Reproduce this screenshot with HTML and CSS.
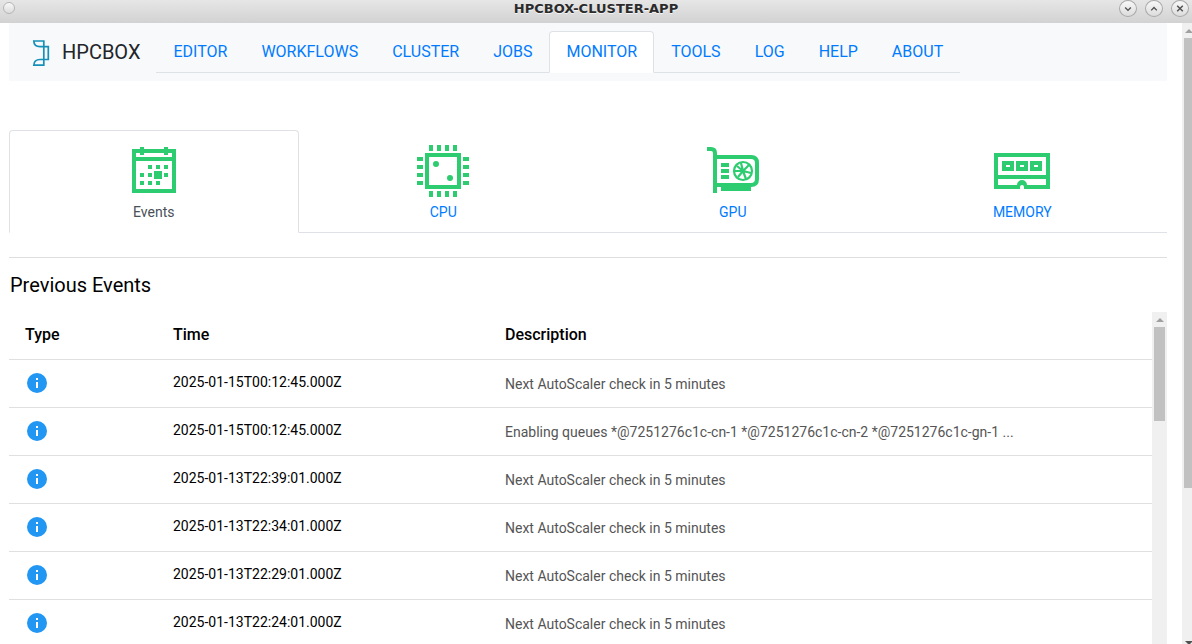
FILE: index.html
```html
<!DOCTYPE html>
<html lang="en">
<head>
<meta charset="utf-8">
<meta name="viewport" content="width=device-width, initial-scale=1">
<title>HPCBOX-CLUSTER-APP</title>
<link rel="stylesheet" href="styles.css">
</head>
<body>
<svg class="defs" aria-hidden="true">
  <symbol id="info" viewBox="0 0 24 24">
    <circle cx="12" cy="12" r="10" fill="#2196f3"/>
    <path d="M11 7h2v2h-2zM11 11h2v6h-2z" fill="#fff"/>
  </symbol>
</svg>
<header class="titlebar">
  <button class="win-btn win-menu" aria-label="Window menu"></button>
  <h1 class="win-title">HPCBOX-CLUSTER-APP</h1>
  <div class="win-controls">
    <button class="win-btn" aria-label="Minimize"><svg viewBox="0 0 16 16"><path d="M5 7l3 3 3-3"/></svg></button>
    <button class="win-btn" aria-label="Maximize"><svg viewBox="0 0 16 16"><path d="M5 10l3-3 3 3"/></svg></button>
    <button class="win-btn" aria-label="Close"><svg viewBox="0 0 16 16"><path d="M5 5l6 6M11 5l-6 6"/></svg></button>
  </div>
</header>
<div class="viewport">
  <main class="page">
    <nav class="navbar">
      <a class="brand" href="#">
        <svg class="logo" viewBox="0 0 32 32" aria-hidden="true">
          <path d="M8.800 5H18.800V29.200H8.800Q9 23.500 15 23.500H23.300V10.700H15Q9 10.700 8.800 5z"/>
        </svg>
        <span>HPCBOX</span>
      </a>
      <div class="nav-tabs">
        <a class="nav-link" href="#">EDITOR</a>
        <a class="nav-link" href="#">WORKFLOWS</a>
        <a class="nav-link" href="#">CLUSTER</a>
        <a class="nav-link" href="#">JOBS</a>
        <a class="nav-link active" href="#" aria-current="page">MONITOR</a>
        <a class="nav-link" href="#">TOOLS</a>
        <a class="nav-link" href="#">LOG</a>
        <a class="nav-link" href="#">HELP</a>
        <a class="nav-link" href="#">ABOUT</a>
      </div>
    </nav>
    <div class="monitor-tabs">
      <a class="monitor-tab active" href="#">
        <svg class="tab-icon" viewBox="0 0 64 64" aria-hidden="true">
          <path fill-rule="evenodd" d="M10 10h8V8h4v2h20V8h4v2h8v44H10zM14 14v4h36v-4h-4v2h-4v-2H22v2h-4v-2zM14 22v28h36V22z"/>
          <path d="M26 26h4v4h-4zM34 26h4v4h-4zM42 26h4v4h-4zM18 34h4v4h-4zM26 34h4v4h-4zM32 32h8v8h-8zM42 34h4v4h-4zM18 42h4v4h-4zM26 42h4v4h-4zM34 42h4v4h-4z"/>
        </svg>
        <span>Events</span>
      </a>
      <a class="monitor-tab" href="#">
        <svg class="tab-icon" viewBox="0 0 64 64" aria-hidden="true">
          <path fill-rule="evenodd" d="M14 14h36v36H14zM18 18v28h28V18z"/>
          <path d="M18 6h4v6h-4zM26 6h4v6h-4zM34 6h4v6h-4zM42 6h4v6h-4zM18 52h4v6h-4zM26 52h4v6h-4zM34 52h4v6h-4zM42 52h4v6h-4zM6 18h6v4H6zM6 26h6v4H6zM6 34h6v4H6zM6 42h6v4H6zM52 18h6v4h-6zM52 26h6v4h-6zM52 34h6v4h-6zM52 42h6v4h-6z"/>
          <circle cx="25" cy="25" r="3"/><circle cx="39" cy="39" r="3"/>
        </svg>
        <span>CPU</span>
      </a>
      <a class="monitor-tab" href="#">
        <svg class="tab-icon" viewBox="0 0 64 64" aria-hidden="true">
          <path class="line" d="M6 10h4q4 0 4 4v40M14 18h36q6 0 6 6v16q0 6-6 6H14"/>
          <path d="M20 46h30v6H20zM20 24h8v4h-8zM20 30h8v4h-8zM20 36h8v4h-8z"/>
          <circle class="fan" cx="42" cy="32" r="9"/>
          <path class="fan" d="M42 32L40 24M42 32l6-6M42 32l8 2M42 32l3 8M42 32l-5 6M42 32l-8 0M42 32l-6-5"/>
        </svg>
        <span>GPU</span>
      </a>
      <a class="monitor-tab" href="#">
        <svg class="tab-icon" viewBox="0 0 64 64" aria-hidden="true">
          <path fill-rule="evenodd" d="M4 14h56v36H34v-2a2 2 0 0 0-4 0v2H4zM8 18v18h48V18zM8 40v6h19a5 5 0 0 1 10 0h19v-6z"/>
          <path fill-rule="evenodd" d="M12 22h12v10H12zM16 26v2h4v-2zM26 22h12v10H26zM30 26v2h4v-2zM40 22h12v10H40zM44 26v2h4v-2z"/>
        </svg>
        <span>MEMORY</span>
      </a>
    </div>
    <section class="events">
      <h2 class="events-title">Previous Events</h2>
      <div class="events-scroll">
        <table class="events-table">
          <thead><tr><th class="col-type">Type</th><th class="col-time">Time</th><th>Description</th></tr></thead>
          <tbody>
            <tr><td><svg class="info" role="img" aria-label="Info"><use href="#info"/></svg></td><td class="time">2025-01-15T00:12:45.000Z</td><td class="desc">Next AutoScaler check in 5 minutes</td></tr>
            <tr><td><svg class="info" role="img" aria-label="Info"><use href="#info"/></svg></td><td class="time">2025-01-15T00:12:45.000Z</td><td class="desc">Enabling queues *@7251276c1c-cn-1 *@7251276c1c-cn-2 *@7251276c1c-gn-1 ...</td></tr>
            <tr><td><svg class="info" role="img" aria-label="Info"><use href="#info"/></svg></td><td class="time">2025-01-13T22:39:01.000Z</td><td class="desc">Next AutoScaler check in 5 minutes</td></tr>
            <tr><td><svg class="info" role="img" aria-label="Info"><use href="#info"/></svg></td><td class="time">2025-01-13T22:34:01.000Z</td><td class="desc">Next AutoScaler check in 5 minutes</td></tr>
            <tr><td><svg class="info" role="img" aria-label="Info"><use href="#info"/></svg></td><td class="time">2025-01-13T22:29:01.000Z</td><td class="desc">Next AutoScaler check in 5 minutes</td></tr>
            <tr><td><svg class="info" role="img" aria-label="Info"><use href="#info"/></svg></td><td class="time">2025-01-13T22:24:01.000Z</td><td class="desc">Next AutoScaler check in 5 minutes</td></tr>
          </tbody>
        </table>
        <div class="scrollbar"><span class="arrow-up"></span><div class="thumb"></div></div>
      </div>
    </section>
  </main>
  <div class="scrollbar scrollbar-page"><span class="arrow-up"></span><div class="thumb"></div><span class="arrow-down"></span></div>
</div>
</body>
</html>
```

FILE: styles.css
```css
* { box-sizing: border-box; }

body {
  margin: 0;
  height: 100vh;
  display: flex;
  flex-direction: column;
  overflow: hidden;
  background: #fff;
  color: #000;
  font-family: Roboto, "Liberation Sans", sans-serif;
  font-size: 14px;
}

a { color: #007bff; text-decoration: none; }

.defs { display: none; }

.titlebar {
  flex: none;
  height: 23px;
  display: grid;
  grid-template-columns: 1fr auto 1fr;
  align-items: start;
  padding: 0 3px;
  background: linear-gradient(#e6e6e6, #d2d2d2);
}

.win-title {
  margin: 0;
  font: bold 13px/18px "DejaVu Sans", sans-serif;
  color: #2b2b2b;
  text-shadow: 0 1px 0 #f4f4f4;
}

.win-controls {
  justify-self: end;
  display: flex;
  gap: 8px;
}

.win-btn {
  width: 18px;
  height: 17px;
  padding: 0;
  border: 1px solid #a9a9a9;
  border-radius: 50%;
  background: linear-gradient(#f8f8f8, #dcdcdc);
}

.win-btn svg {
  display: block;
  width: 16px;
  height: 15px;
  fill: none;
  stroke: #505050;
  stroke-width: 1.5;
}

.win-menu {
  width: 12px;
  height: 12px;
  margin-top: 2px;
  border-color: #b5b5b5;
}

.viewport {
  flex: 1;
  min-height: 0;
  display: flex;
}

.page {
  flex: 1;
  min-width: 0;
  display: flex;
  flex-direction: column;
  padding: 0 15px 0 9px;
}

.navbar {
  flex: none;
  display: flex;
  align-items: center;
  padding: 8px 16px;
  background: #f8f9fa;
}

.brand {
  display: flex;
  align-items: center;
  gap: 5px;
  margin-right: 16px;
  font-size: 20px;
  line-height: 30px;
  color: #212529;
}

.logo {
  width: 32px;
  height: 32px;
  fill: none;
  stroke: #1590b8;
  stroke-width: 1.7;
}

.nav-tabs {
  display: flex;
  border-bottom: 1px solid #dee2e6;
}

.nav-link {
  margin-bottom: -1px;
  padding: 8px 16px;
  border: 1px solid transparent;
  border-radius: 4px 4px 0 0;
  font-size: 16px;
  line-height: 24px;
}

.nav-link.active {
  background: #fff;
  border-color: #dee2e6 #dee2e6 #fff;
}

.monitor-tabs {
  flex: none;
  display: flex;
  margin-top: 49px;
  border-bottom: 1px solid #dee2e6;
}

.monitor-tab {
  flex: 1;
  display: flex;
  flex-direction: column;
  align-items: center;
  margin-bottom: -1px;
  padding: 8px 8px 10px;
  border: 1px solid transparent;
  border-radius: 4px 4px 0 0;
  line-height: 19px;
}

.monitor-tab.active {
  color: #495057;
  background: #fff;
  border-color: #dee2e6 #dee2e6 #fff;
}

.tab-icon {
  width: 64px;
  height: 64px;
  fill: #2ecc71;
}

.tab-icon .line { fill: none; stroke: #2ecc71; stroke-width: 4; }
.tab-icon .fan { fill: none; stroke: #2ecc71; stroke-width: 2.2; }

.events {
  flex: 1;
  min-height: 0;
  display: flex;
  flex-direction: column;
  margin-top: 24px;
  border-top: 1px solid #dedede;
}

.events-title {
  margin: 12px 0;
  padding-left: 1px;
  font-size: 20px;
  line-height: 30px;
  font-weight: 400;
}

.events-scroll {
  flex: 1;
  min-height: 0;
  display: flex;
  overflow: hidden;
}

.events-table {
  flex: 1;
  align-self: flex-start;
  border-collapse: separate;
  border-spacing: 0;
  table-layout: fixed;
}

.events-table th,
.events-table td {
  height: 48px;
  padding: 0 16px 2px;
  border-bottom: 1px solid #e0e0e0;
  text-align: left;
  line-height: 20px;
}

.events-table th {
  font-size: 16px;
  font-weight: 500;
}

.events-table .time { padding-bottom: 4px; }

.events-table .desc {
  padding-bottom: 0;
  color: #555;
}

.col-type { width: 148px; }
.col-time { width: 332px; }

.info {
  display: block;
  width: 24px;
  height: 24px;
}

.scrollbar {
  flex: none;
  width: 15px;
  display: flex;
  flex-direction: column;
  background: #f0f0f0;
}

.scrollbar .thumb {
  height: 94px;
  margin: 0 2px;
  background: #c1c1c1;
}

.arrow-up,
.arrow-down {
  height: 15px;
  flex: none;
  display: flex;
  align-items: center;
  justify-content: center;
}

.arrow-up::before {
  content: "";
  border: solid transparent;
  border-width: 0 4px 4px;
  border-bottom-color: #a0a0a0;
}

.scrollbar-page {
  width: 10px;
}

.scrollbar-page .thumb {
  height: 450px;
  margin-right: 0;
}

.scrollbar-page .arrow-up,
.scrollbar-page .arrow-down {
  justify-content: flex-start;
  padding-left: 3px;
}

.scrollbar-page .arrow-down {
  height: 3px;
  margin-top: auto;
  align-items: flex-start;
}

.arrow-down::before {
  content: "";
  border: solid transparent;
  border-width: 4px 4px 0;
  border-top-color: #505050;
}
```
